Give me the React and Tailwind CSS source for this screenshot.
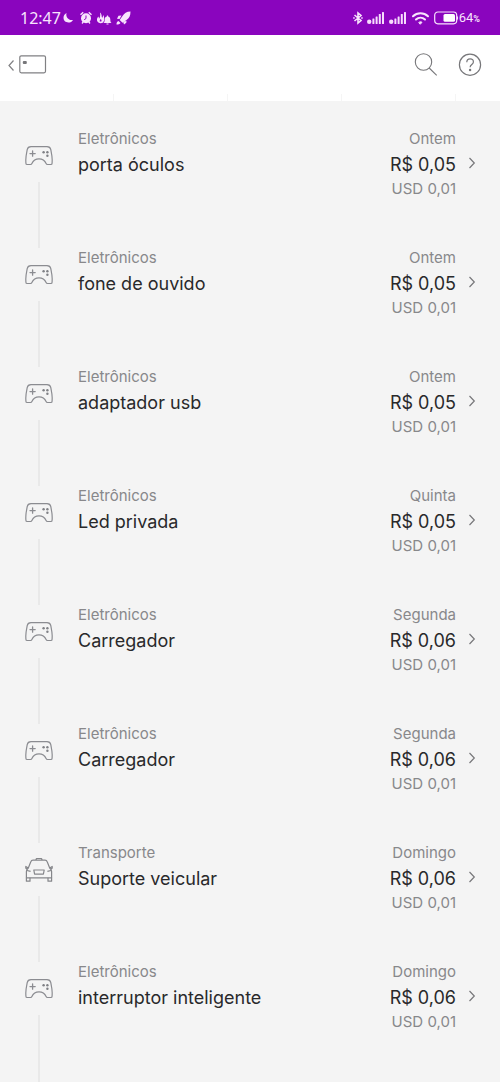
import React from "react";

const transactions = [
  { category: "Eletrônicos", title: "porta óculos", day: "Ontem", brl: "R$ 0,05", usd: "USD 0,01", icon: "game" },
  { category: "Eletrônicos", title: "fone de ouvido", day: "Ontem", brl: "R$ 0,05", usd: "USD 0,01", icon: "game" },
  { category: "Eletrônicos", title: "adaptador usb", day: "Ontem", brl: "R$ 0,05", usd: "USD 0,01", icon: "game" },
  { category: "Eletrônicos", title: "Led privada", day: "Quinta", brl: "R$ 0,05", usd: "USD 0,01", icon: "game" },
  { category: "Eletrônicos", title: "Carregador", day: "Segunda", brl: "R$ 0,06", usd: "USD 0,01", icon: "game" },
  { category: "Eletrônicos", title: "Carregador", day: "Segunda", brl: "R$ 0,06", usd: "USD 0,01", icon: "game" },
  { category: "Transporte", title: "Suporte veicular", day: "Domingo", brl: "R$ 0,06", usd: "USD 0,01", icon: "car" },
  { category: "Eletrônicos", title: "interruptor inteligente", day: "Domingo", brl: "R$ 0,06", usd: "USD 0,01", icon: "game" },
];

function GamepadIcon() {
  return (
    <svg width="28" height="28" viewBox="0 0 28 28" fill="none" stroke="#8b8c91" strokeWidth="1.2" strokeLinecap="round" strokeLinejoin="round" aria-hidden="true">
      <path d="M6 4.600h16c2.200 0 3.400 1 3.800 3l1.100 6.400c.3 2.500.4 5 .2 7.200 0 .9-.4 1.300-1.300 1.300h-3.300c-.7 0-1.100-.3-1.400-1-1.300-3-3.600-4.700-7.100-4.700s-5.800 1.700-7.100 4.700c-.3.7-.7 1-1.400 1H2.200c-.9 0-1.300-.4-1.300-1.300-.2-2.200-.1-4.700.2-7.200L2.200 7.600c.4-2 1.600-3 3.800-3Z" />
      <path d="M7.600 9v5.200M5 11.600h5.200" strokeWidth="1.300" />
      <g fill="#7f8085" stroke="none">
        <circle cx="18.600" cy="10.300" r="1.200" />
        <circle cx="22.400" cy="10.300" r="1.200" />
        <circle cx="22.400" cy="13.800" r="1.200" />
      </g>
    </svg>
  );
}

function CarIcon() {
  return (
    <svg width="28" height="28" viewBox="0 0 28 28" fill="none" stroke="#85868a" strokeWidth="1.200" strokeLinejoin="round" aria-hidden="true">
      <path d="M10.800 4 11.500 2.500h5L17.200 4M3.300 12 5.800 5.700C6.200 4.600 7 4.100 8 4.100h12c1 0 1.800.5 2.200 1.600L24.700 12c1.300 1 1.900 2.100 1.900 3.600v6.200H1.400v-6.200c0-1.500.6-2.600 1.900-3.600Z" />
      <path d="M3.300 12 .800 10.500v1.800l1.600.7M24.700 12l2.500-1.500v1.800l-1.600.7M2 14.500l3.600.8M26 14.500l-3.600.8M8.800 14h10.400l-.8 4.200H9.600Z" />
      <path d="M1.400 21.800v3.400H5v-3.400M23 21.800v3.400h3.600v-3.400" />
    </svg>
  );
}

function SignalIcon() {
  return (
    <svg width="18" height="14" viewBox="0 0 18 14" fill="#f6ddfc" aria-hidden="true">
      <circle cx="2.200" cy="10.800" r="2.200" />
      <rect x="5.400" y="7.500" width="2" height="5.500" rx=".5" />
      <rect x="8.600" y="5.500" width="2" height="7.500" rx=".5" />
      <rect x="11.800" y="3" width="2" height="10" rx=".5" />
      <rect x="15" y="1" width="2" height="12" rx=".5" />
    </svg>
  );
}

function StatusBar() {
  return (
    <div className="flex h-[35px] items-center justify-between bg-[#8a05be] pr-5 pl-5 pt-px text-[#f8e4fd]">
      <div className="flex items-center">
        <span className="w-[42px] font-['Noto_Sans',sans-serif] text-base leading-5">12:47</span>
        <svg width="70" height="16" viewBox="0 0 70 16" fill="currentColor" aria-hidden="true">
          <path d="M4.500 3C2.500 4 1.500 5.800 1.500 7.800c0 2.800 2.100 4.700 4.900 4.700 2 0 3.800-1 4.600-2.600-4 .9-7.600-2.500-6.500-6.900Z" />
          <circle cx="24" cy="8.200" r="5" />
          <path d="m18 4.200 2.800-2.400.9 1L19 5.200ZM30 4.200l-2.800-2.400-.9 1L29 5.200ZM19.500 13l1.500-2 1 1-1.500 2ZM28.500 13 27 11l-1 1 1.500 2Z" />
          <path d="M24 5.500v3l-1.800 1.200" fill="none" stroke="#8a05be" strokeWidth="1" />
          <path d="M38 2.500c2.600 2.400 1 4 2.400 5.200l1-2.700c1 2.200 1.300 5.400-.3 7.600-2.400 1.400-5.400.4-6-1.800-.5-1.800.3-3.400 1.500-4.300l.4 2.300c1.300-1.600 1.500-3.600 1-6.300Z" />
          <path d="M41.500 13c1.300-1 1-2.400 1.200-4 .2-1.600 1-2.300 2.200-2.500v-.900h1.200v.9c1.300.3 2.100 1.200 2.200 2.800.1 1.400-.1 2.700 1.200 3.700ZM44.500 13.500h2v1h-2Z" />
          <path d="M37.800 11.500c-.4-1 .2-1.800 1-2.500.8 1 .9 1.800.5 2.500Z" fill="#8a05be" />
          <path d="M68.500 1.500c-4 .1-6.300 1.800-8 4.500l-2.800 4 2.800 2.800 4-2.800c2.700-1.700 4-4 4-8.500ZM59.500 5.500l-3 .2-1.500 3 2.500.2ZM64.500 10.800l-.2 2-2.300 1.700-.8-2.500ZM56.500 11l2 2c-1 1.300-2 1.500-4 1.500 0-1.800.5-3 2-3.500Z" />
        </svg>
      </div>
      <div className="flex items-center gap-1">
        <svg width="10" height="14" viewBox="0 0 10 14" fill="none" stroke="currentColor" strokeWidth="1.600" aria-hidden="true">
          <path d="m1.500 4 6.500 5.500L5 12V2l3 2.500L1.500 10M.2 7h1.500M8.200 7h1.500" />
        </svg>
        <SignalIcon />
        <SignalIcon />
        <svg width="19" height="15" viewBox="0 0 19 15" fill="none" stroke="currentColor" strokeWidth="2" strokeLinecap="round" aria-hidden="true">
          <path d="M2 5.200C6.200 1.200 12.800 1.200 17 5.200M5 8.500c2.600-2.400 6.400-2.400 9 0" />
          <path d="M8 11.300c.9-.7 2.100-.7 3 0l-1.500 1.700Z" fill="currentColor" strokeWidth="1" />
        </svg>
        <svg width="25" height="14" viewBox="0 0 25 14" aria-hidden="true">
          <rect x=".7" y="1" width="22" height="11.800" rx="3.200" fill="none" stroke="currentColor" strokeWidth="1.200" />
          <rect x="9.500" y="3" width="11.500" height="7.800" rx="1.500" fill="#fff" />
          <path d="M23 5c1.500.5 1.500 3.500 0 4Z" fill="currentColor" />
        </svg>
        <span className="-ml-1 flex items-baseline font-['Roboto',sans-serif] text-[13px] leading-4">
          64<span className="text-[9px] font-bold">%</span>
        </span>
      </div>
    </div>
  );
}

function Header() {
  return (
    <header className="flex h-[66px] flex-col bg-white">
      <div className="flex h-[59px] items-center justify-between pr-[18px] pl-[7px]">
        <button type="button" aria-label="Voltar" className="flex items-center">
          <svg width="40" height="20" viewBox="0 0 40 20" fill="none" stroke="#808083" strokeWidth="1.200" aria-hidden="true">
            <path d="M6.500 5.500 2 10.500l4.500 5" />
            <rect x="12.800" y=".8" width="25.700" height="17" rx="1.500" />
            <rect x="15.800" y="6" width="4" height="3" rx="1" fill="#77777a" stroke="none" />
          </svg>
        </button>
        <div className="flex items-center gap-5">
          <button type="button" aria-label="Buscar">
            <svg width="24" height="24" viewBox="0 0 24 24" fill="none" stroke="#77777a" strokeWidth="1.100" aria-hidden="true">
              <circle cx="9.500" cy="9" r="8.200" />
              <path d="m15.200 15 7.500 7.300" />
            </svg>
          </button>
          <button type="button" aria-label="Ajuda">
            <svg width="24" height="24" viewBox="0 0 24 24" fill="none" stroke="#77777a" strokeWidth="1.200" aria-hidden="true">
              <circle cx="12" cy="11.700" r="10.600" />
              <path d="M8.800 9.200c0-2 1.300-3.300 3.300-3.300s3.300 1.200 3.300 3c0 2.600-3.300 2.500-3.300 5.300" />
              <circle cx="12.100" cy="17" r="1.200" fill="#77777a" stroke="none" />
            </svg>
          </button>
        </div>
      </div>
      <div className="flex flex-1 overflow-hidden">
        {[0, 1, 2, 3].map((i) => (
          <div key={i} className="w-[114px] shrink-0 border-r border-[#f5f5f5]" />
        ))}
      </div>
    </header>
  );
}

function Transaction({ item }) {
  return (
    <li className="flex min-h-[119px] last:grow">
      <div className="flex w-[78px] shrink-0 flex-col items-center">
        <div className="flex h-[53px] items-center">
          {item.icon === "car" ? <CarIcon /> : <GamepadIcon />}
        </div>
        <div className="w-0.5 flex-1 bg-[#e9e9e9]" />
      </div>
      <a href="#detalhes" className="flex min-w-0 flex-1 pr-6">
        <div className="min-w-0 flex-1">
          <p className="text-[15px] leading-5 text-[#88888b]">{item.category}</p>
          <p className="text-lg leading-8 text-[#29292b]">{item.title}</p>
        </div>
        <div className="text-right">
          <p className="text-[15px] leading-5 text-[#88888b]">{item.day}</p>
          <p className="text-lg leading-8 text-[#29292b]">{item.brl}</p>
          <p className="text-[15px] leading-4 text-[#88888b]">{item.usd}</p>
        </div>
        <svg className="mt-7 ml-3 shrink-0" width="8" height="12" viewBox="0 0 8 12" fill="none" stroke="#77777a" strokeWidth="1.200" aria-hidden="true">
          <path d="m1.500 1 4.800 5-4.800 5" />
        </svg>
      </a>
    </li>
  );
}

export default function App() {
  return (
    <div className="flex min-h-screen flex-col bg-[#f4f4f4] font-['Inter',sans-serif]">
      <StatusBar />
      <Header />
      <main className="flex flex-1 flex-col pt-7">
        <ul className="flex flex-1 flex-col">
          {transactions.map((item, i) => (
            <Transaction key={i} item={item} />
          ))}
        </ul>
      </main>
    </div>
  );
}
